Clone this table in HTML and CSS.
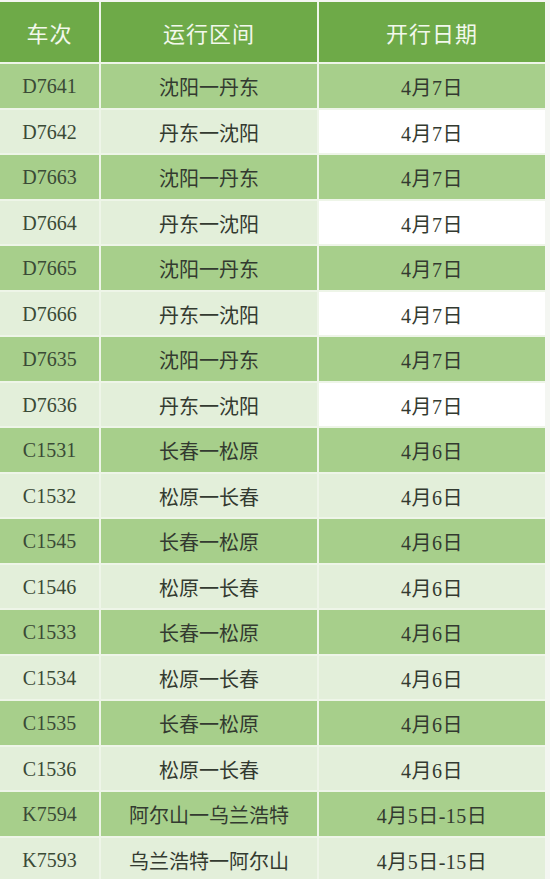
FILE: index.html
```html
<!DOCTYPE html>
<html lang="zh-CN">
<head>
<meta charset="utf-8">
<title>列车开行表</title>
<link rel="stylesheet" href="styles.css">
</head>
<body>
<div class="page">
  <div class="grid">
    <div class="cell head">车次</div><div class="cell head">运行区间</div><div class="cell head">开行日期</div>

    <div class="cell dark num">D7641</div><div class="cell dark">沈阳一丹东</div><div class="cell dark date">4月7日</div>
    <div class="cell light num">D7642</div><div class="cell light">丹东一沈阳</div><div class="cell white date">4月7日</div>
    <div class="cell dark num">D7663</div><div class="cell dark">沈阳一丹东</div><div class="cell dark date">4月7日</div>
    <div class="cell light num">D7664</div><div class="cell light">丹东一沈阳</div><div class="cell white date">4月7日</div>
    <div class="cell dark num">D7665</div><div class="cell dark">沈阳一丹东</div><div class="cell dark date">4月7日</div>
    <div class="cell light num">D7666</div><div class="cell light">丹东一沈阳</div><div class="cell white date">4月7日</div>
    <div class="cell dark num">D7635</div><div class="cell dark">沈阳一丹东</div><div class="cell dark date">4月7日</div>
    <div class="cell light num">D7636</div><div class="cell light">丹东一沈阳</div><div class="cell white date">4月7日</div>
    <div class="cell dark num">C1531</div><div class="cell dark">长春一松原</div><div class="cell dark date">4月6日</div>
    <div class="cell light num">C1532</div><div class="cell light">松原一长春</div><div class="cell light date">4月6日</div>
    <div class="cell dark num">C1545</div><div class="cell dark">长春一松原</div><div class="cell dark date">4月6日</div>
    <div class="cell light num">C1546</div><div class="cell light">松原一长春</div><div class="cell light date">4月6日</div>
    <div class="cell dark num">C1533</div><div class="cell dark">长春一松原</div><div class="cell dark date">4月6日</div>
    <div class="cell light num">C1534</div><div class="cell light">松原一长春</div><div class="cell light date">4月6日</div>
    <div class="cell dark num">C1535</div><div class="cell dark">长春一松原</div><div class="cell dark date">4月6日</div>
    <div class="cell light num">C1536</div><div class="cell light">松原一长春</div><div class="cell light date">4月6日</div>
    <div class="cell dark num">K7594</div><div class="cell dark">阿尔山一乌兰浩特</div><div class="cell dark date">4月5日-15日</div>
    <div class="cell light num">K7593</div><div class="cell light">乌兰浩特一阿尔山</div><div class="cell light date">4月5日-15日</div>
  </div>
</div>
</body>
</html>
```

FILE: styles.css
```css
html, body {
  margin: 0;
  padding: 0;
  background: #f4f6f2;
}
.page {
  width: 550px;
  height: 879px;
  overflow: hidden;
  padding-top: 2px;
  box-sizing: border-box;
}
.grid {
  width: 545px;
  display: grid;
  grid-template-columns: 99px 216px 226px;
  grid-template-rows: 60px repeat(18, 43.5px);
  column-gap: 2px;
  row-gap: 2px;
  background: #eef5e8;
  font-family: "Liberation Serif", "Noto Sans CJK SC", serif;
  font-size: 20px;
  color: #333a30;
}
.cell {
  display: flex;
  align-items: center;
  justify-content: center;
  white-space: nowrap;
  padding-top: 2px;
}
.head {
  background: #6eaa48;
  color: #f2f8ec;
  font-size: 22px;
  font-family: "Noto Sans CJK SC", sans-serif;
  letter-spacing: 1px;
  padding-top: 0;
}
.dark {
  background: #a7cf8b;
}
.light {
  background: #e3efda;
}
.white {
  background: #ffffff;
}
.num {
  color: #3a4a36;
}
.date {
  letter-spacing: 0.5px;
}
```
